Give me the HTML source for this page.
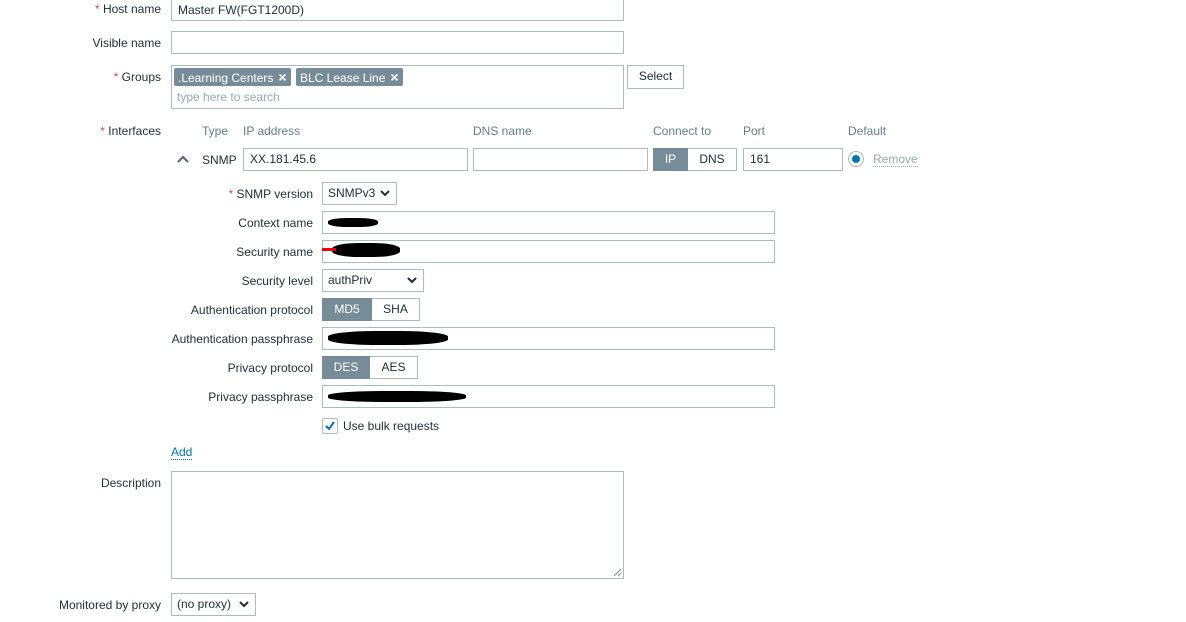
<!DOCTYPE html>
<html><head><meta charset="utf-8"><style>
*{box-sizing:border-box}
body{margin:0;width:1186px;height:622px;background:#fff;font-family:"Liberation Sans",Arial,sans-serif;font-size:12px;color:#1f2c33;position:relative;overflow:hidden}
.a{position:absolute;white-space:nowrap}
.l{position:absolute;text-align:right;white-space:nowrap;line-height:14px}
.r{color:#d64e4e}
.in{position:absolute;border:1px solid #acbbc2;background:#fff;height:23px;padding:0 6px;line-height:21px}
.sel{position:absolute;border:1px solid #acbbc2;background:#fff;height:23px;padding:0 5px;line-height:21px}
.sel svg{position:absolute;right:6px;top:7px}
.hd{position:absolute;color:#687b86;line-height:14px}
.bt{position:absolute;height:23px;line-height:21px;text-align:center;border:1px solid #acbbc2;background:#fff}
.on{background:#768d99;color:#fff;border-color:#768d99}
.tag{position:absolute;background:#768d99;color:#fff;height:18px;line-height:18px;padding:0 4px;border-radius:2px;white-space:nowrap}
.tag b{font-size:14px;margin-left:5px}
.blob{position:absolute;background:#000;border-radius:40%}
</style></head><body>
<div class="l" style="right:1025px;top:2px"><span class="r">* </span>Host name</div>
<div class="in" style="left:171px;top:-3px;width:453px;height:24px;line-height:24px">Master FW(FGT1200D)</div>
<div class="l" style="right:1025px;top:36px">Visible name</div>
<div class="in" style="left:171px;top:31px;width:453px"></div>
<div class="l" style="right:1025px;top:70px"><span class="r">* </span>Groups</div>
<div class="in" style="left:171px;top:65px;width:453px;height:44px"></div>
<div class="tag" style="left:174px;top:68px">.Learning Centers<b>×</b></div>
<div class="tag" style="left:296px;top:68px">BLC Lease Line<b>×</b></div>
<div class="a" style="left:177px;top:90px;color:#9aa8b0">type here to search</div>
<div class="bt" style="left:627px;top:65px;width:57px;height:24px">Select</div>

<div class="l" style="right:1025px;top:124px"><span class="r">* </span>Interfaces</div>
<div class="hd" style="left:202px;top:124px">Type</div>
<div class="hd" style="left:243px;top:124px">IP address</div>
<div class="hd" style="left:473px;top:124px">DNS name</div>
<div class="hd" style="left:653px;top:124px">Connect to</div>
<div class="hd" style="left:743px;top:124px">Port</div>
<div class="hd" style="left:848px;top:124px">Default</div>
<svg class="a" style="left:176px;top:154px" width="14" height="10"><path d="M2 8 L7 3 L12 8" stroke="#5a6b75" stroke-width="2.2" fill="none"/></svg>
<div class="a" style="left:202px;top:153px">SNMP</div>
<div class="in" style="left:243px;top:148px;width:225px">XX.181.45.6</div>
<div class="in" style="left:473px;top:148px;width:175px"></div>
<div class="bt on" style="left:653px;top:148px;width:35px">IP</div>
<div class="bt" style="left:688px;top:148px;width:49px;border-left:none">DNS</div>
<div class="in" style="left:743px;top:148px;width:100px">161</div>
<div class="a" style="left:848px;top:151px;width:16px;height:16px;border:1px solid #acbbc2;border-radius:50%"><div style="position:absolute;left:3px;top:3px;width:8px;height:8px;border-radius:50%;background:#0275b8"></div></div>
<div class="a" style="left:873px;top:153px;color:#9aa8b0;border-bottom:1px dotted #9aa8b0;line-height:13px">Remove</div>

<div class="l" style="right:873px;top:187px"><span class="r">* </span>SNMP version</div>
<div class="sel" style="left:322px;top:182px;width:75px">SNMPv3<svg width="10" height="7"><path d="M1 1 L5 5 L9 1" stroke="#1f2c33" stroke-width="2" fill="none"/></svg></div>
<div class="l" style="right:873px;top:216px">Context name</div>
<div class="in" style="left:322px;top:211px;width:453px"></div>
<div class="blob" style="left:328px;top:218px;width:50px;height:9px"></div>
<div class="l" style="right:873px;top:245px">Security name</div>
<div class="in" style="left:322px;top:240px;width:453px"></div>
<div class="blob" style="left:332px;top:243px;width:68px;height:14px"></div>
<div class="a" style="left:322px;top:248px;width:14px;height:3px;background:#e00"></div>
<div class="l" style="right:873px;top:274px">Security level</div>
<div class="sel" style="left:322px;top:269px;width:102px">authPriv<svg width="10" height="7"><path d="M1 1 L5 5 L9 1" stroke="#1f2c33" stroke-width="2" fill="none"/></svg></div>
<div class="l" style="right:873px;top:303px">Authentication protocol</div>
<div class="bt on" style="left:322px;top:298px;width:50px">MD5</div>
<div class="bt" style="left:372px;top:298px;width:48px;border-left:none">SHA</div>
<div class="l" style="right:873px;top:332px">Authentication passphrase</div>
<div class="in" style="left:322px;top:327px;width:453px"></div>
<div class="blob" style="left:328px;top:331px;width:120px;height:14px"></div>
<div class="l" style="right:873px;top:361px">Privacy protocol</div>
<div class="bt on" style="left:322px;top:356px;width:48px">DES</div>
<div class="bt" style="left:370px;top:356px;width:48px;border-left:none">AES</div>
<div class="l" style="right:873px;top:390px">Privacy passphrase</div>
<div class="in" style="left:322px;top:385px;width:453px"></div>
<div class="blob" style="left:328px;top:391px;width:138px;height:11px"></div>
<div class="a" style="left:322px;top:418px;width:16px;height:16px;border:1px solid #acbbc2;border-radius:2px"><svg width="14" height="14"><path d="M3 7 L6 10 L11 3" stroke="#0275b8" stroke-width="2" fill="none"/></svg></div>
<div class="a" style="left:343px;top:419px">Use bulk requests</div>

<div class="a" style="left:171px;top:446px;color:#0275b8;border-bottom:1px dotted #0275b8;line-height:13px">Add</div>
<div class="l" style="right:1025px;top:476px">Description</div>
<div class="in" style="left:171px;top:471px;width:453px;height:108px"></div>
<svg class="a" style="left:613px;top:568px" width="9" height="9"><path d="M1 8 L8 1 M5 8 L8 5" stroke="#888" stroke-width="1"/></svg>
<div class="l" style="right:1025px;top:598px">Monitored by proxy</div>
<div class="sel" style="left:171px;top:593px;width:85px">(no proxy)<svg width="10" height="7"><path d="M1 1 L5 5 L9 1" stroke="#1f2c33" stroke-width="2" fill="none"/></svg></div>
</body></html>
